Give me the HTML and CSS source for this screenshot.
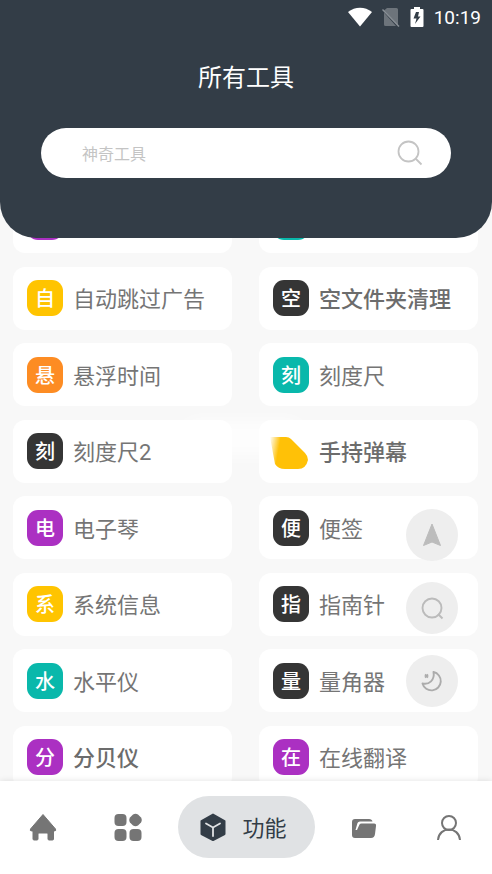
FILE: index.html
```html
<!DOCTYPE html>
<html lang="zh-CN">
<head>
<meta charset="utf-8">
<meta name="viewport" content="width=device-width, initial-scale=1">
<title>所有工具</title>
<link rel="stylesheet" href="styles.css">
</head>
<body>
<header class="header">
  <div class="status">
    <svg width="24" height="20" viewBox="0 0 24 20" aria-hidden="true"><path d="M0 5C7-.8 17-.8 24 5L12 19.500z" fill="#fff"/></svg>
    <svg width="18" height="20" viewBox="0 0 18 20" aria-hidden="true"><path d="M5 1h9.500q1.500 0 1.500 1.500v16L2 3.500zM2 5.500L14 19H3.500Q2 19 2 17.500z" fill="#6d747b"/><path d="M.5 2.500l16.500 17" stroke="#8a9096" stroke-width="1.400"/></svg>
    <svg width="14" height="20" viewBox="0 0 14 20" aria-hidden="true"><path d="M4 0h6v2h2.500q1 0 1 1v16q0 1-1 1h-11q-1 0-1-1V3q0-1 1-1H4z" fill="#fff"/><path d="M9 5H6L3.500 11.500h3L5 17l5.500-7.500H8z" fill="#333d47"/></svg>
    <span class="clock">10:19</span>
  </div>
  <h1 class="title">所有工具</h1>
  <form class="search">
    <input class="search-input" type="text" placeholder="神奇工具" aria-label="搜索工具">
    <button class="search-button" type="button" aria-label="搜索">
      <svg width="26" height="26" viewBox="0 0 26 26" fill="none" stroke="#c4c4c4" stroke-width="1.800"><circle cx="11.500" cy="11.500" r="10"/><path d="M18.500 18.500l6 6"/></svg>
    </button>
  </form>
</header>

<main class="tools">
  <a class="card" href="#"><span class="tile purple"></span></a>
  <a class="card" href="#"><span class="tile teal"></span></a>
  <a class="card" href="#"><span class="tile yellow">自</span><span class="label">自动跳过广告</span></a>
  <a class="card strong" href="#"><span class="tile dark">空</span><span class="label">空文件夹清理</span></a>
  <a class="card" href="#"><span class="tile orange">悬</span><span class="label">悬浮时间</span></a>
  <a class="card" href="#"><span class="tile teal">刻</span><span class="label">刻度尺</span></a>
  <a class="card" href="#"><span class="tile dark">刻</span><span class="label">刻度尺2</span></a>
  <a class="card strong" href="#"><svg class="tile-cut" width="40" height="36" viewBox="-4 0 40 36" aria-hidden="true"><defs><linearGradient id="fade" x1="0" y1="0" x2="1" y2="0.150"><stop offset="0" stop-color="#ffc107" stop-opacity="0"/><stop offset=".28" stop-color="#ffc107"/><stop offset="1" stop-color="#ffc107"/></linearGradient></defs><path d="M-3 4H13Q16 4 18 6L32 20Q35 23 35 27Q33 36 25 36H12Q5 36 2 31z" fill="url(#fade)"/></svg><span class="label">手持弹幕</span></a>
  <a class="card" href="#"><span class="tile purple">电</span><span class="label">电子琴</span></a>
  <a class="card" href="#"><span class="tile dark">便</span><span class="label">便签</span></a>
  <a class="card" href="#"><span class="tile yellow">系</span><span class="label">系统信息</span></a>
  <a class="card" href="#"><span class="tile dark">指</span><span class="label">指南针</span></a>
  <a class="card" href="#"><span class="tile teal">水</span><span class="label">水平仪</span></a>
  <a class="card" href="#"><span class="tile dark">量</span><span class="label">量角器</span></a>
  <a class="card strong" href="#"><span class="tile purple">分</span><span class="label">分贝仪</span></a>
  <a class="card" href="#"><span class="tile purple">在</span><span class="label">在线翻译</span></a>
  <div class="glow"></div>
</main>

<div class="floating">
  <button class="round" type="button" aria-label="定位"><svg width="20" height="24" viewBox="0 0 20 24"><path d="M10 1L18.500 22.500 10 19 1.500 22.500z" fill="#bcbcbc" stroke="#bcbcbc" stroke-linejoin="round"/></svg></button>
  <button class="round" type="button" aria-label="查找"><svg width="24" height="24" viewBox="0 0 24 24" fill="none" stroke="#bbb" stroke-width="1.900"><circle cx="12" cy="12" r="9.500"/><path d="M18 18l4.500 4.500"/></svg></button>
  <button class="round" type="button" aria-label="夜间模式"><svg width="24" height="24" viewBox="0 0 24 24" fill="none" stroke="#acacac" stroke-width="1.900" stroke-linejoin="round"><path d="M13.500 3A9.300 9.300 0 1 1 2.500 14.500C9 16 15 11 13.500 3z"/><path d="M5 5.500l3 3M8 5.500l-3 3" stroke-width="1.800"/></svg></button>
</div>

<nav class="nav">
  <button class="nav-item" type="button" aria-label="首页"><svg width="28" height="28" viewBox="0 0 28 28"><path d="M14 1.500L26.500 16Q27.500 18 25 18H24.500V26Q24.500 27 23.500 27H20Q19 27 19 26V21Q19 20 18 20H10Q9 20 9 21V26Q9 27 8 27H5Q4 27 4 26V18H3Q.5 18 1.500 16z" fill="#757575" stroke="#757575" stroke-linejoin="round"/></svg></button>
  <button class="nav-item" type="button" aria-label="分类"><svg width="28" height="28" viewBox="0 0 28 28" fill="#757575"><rect x=".5" y="1" width="12" height="12" rx="4"/><path d="M19 1.500q2.500-1.500 5 0l3 3q1.500 2.500 0 5l-3 3q-2.500 1.500-5 0l-3-3q-1.500-2.500 0-5z"/><rect x=".5" y="16" width="12" height="12" rx="4"/><rect x="15.500" y="16" width="12" height="12" rx="4"/></svg></button>
  <button class="nav-item active" type="button"><svg width="28" height="28" viewBox="0 0 28 28"><path d="M14 1.500L25.500 8v13L14 27 2.500 21V8z" fill="#333d47" stroke="#333d47" stroke-width="2" stroke-linejoin="round"/><path d="M7 10.500l7 4 7-4M14 14.500v8.500" fill="none" stroke="#e0e2e4" stroke-width="1.800" stroke-linecap="round"/></svg><span class="label">功能</span></button>
  <button class="nav-item" type="button" aria-label="文件"><svg width="26" height="28" viewBox="0 0 26 28"><path d="M1 9Q1 6 4 6H18Q21 6 21.500 8.500H9Q7 8.500 6.500 10L4.500 17H6L8.500 11.500Q9 10.500 10.500 10.500H23Q25.500 10.500 25 13L24 21Q23.500 25 20 25H4Q1 25 1 22z" fill="#757575"/></svg></button>
  <button class="nav-item" type="button" aria-label="我的"><svg width="26" height="28" viewBox="0 0 26 28" fill="none" stroke="#757575" stroke-width="2"><circle cx="13" cy="10" r="7"/><path d="M2 27C3 13 23 13 24 27"/></svg></button>
</nav>
</body>
</html>
```

FILE: styles.css
```css
* {
  box-sizing: border-box;
}

body {
  position: relative;
  display: flex;
  flex-direction: column;
  min-height: 100vh;
  margin: 0;
  background: #f8f8f8;
  color: #757575;
  font-family: Roboto, "Noto Sans CJK SC", sans-serif;
}

button {
  padding: 0;
  border: 0;
  background: none;
  font: inherit;
  color: inherit;
}

svg {
  flex: none;
}

.header {
  position: relative;
  z-index: 1;
  padding-bottom: 60px;
  border-radius: 0 0 36px 36px;
  background: #333d47;
}

.status {
  display: flex;
  align-items: center;
  justify-content: flex-end;
  gap: 10px;
  height: 34px;
  padding-right: 11px;
}

.clock {
  color: #fff;
  font-size: 19px;
  font-weight: 400;
}

.title {
  margin: 25px 0 31px;
  color: #fff;
  font-size: 24px;
  font-weight: 400;
  line-height: 38px;
  text-align: center;
}

.search {
  display: flex;
  align-items: center;
  height: 50px;
  margin: 0 41px;
  padding: 0 28px 0 41px;
  border-radius: 25px;
  background: #fff;
}

.search-input {
  flex: 1;
  min-width: 0;
  padding: 2px 0 0;
  border: 0;
  outline: 0;
  background: none;
  color: #757575;
  font: inherit;
  font-size: 16px;
}

.search-input::placeholder {
  color: #c4c4c4;
}

.search-button {
  display: flex;
}

.tools {
  position: relative;
  display: grid;
  flex: 1;
  grid-template-columns: 1fr 1fr;
  grid-auto-rows: 63px;
  align-content: space-between;
  column-gap: 27px;
  margin: -48px 14px -8px 13px;
}

.card {
  display: flex;
  align-items: center;
  gap: 10px;
  padding: 0 14px;
  border-radius: 12px;
  background: #fff;
  color: inherit;
  font-size: 22px;
  text-decoration: none;
  white-space: nowrap;
}

.label {
  padding-bottom: 2px;
}

.strong {
  color: #6c6c6c;
  font-weight: 500;
}

.tile {
  display: flex;
  flex: none;
  align-items: center;
  justify-content: center;
  width: 36px;
  height: 36px;
  padding-top: 2px;
  border-radius: 11px;
  color: #fff;
  font-size: 20px;
  font-weight: 500;
  line-height: 34px;
}

.tile-cut {
  position: relative;
  z-index: 1;
  margin-left: -4px;
  filter: blur(0.6px);
}

.purple { background: #ab30c2; }
.teal { background: #09b8ab; }
.yellow { background: #ffc400; }
.orange { background: #fd8c23; }
.dark { background: #353535; }

.glow {
  position: absolute;
  top: 230px;
  left: 168px;
  width: 124px;
  height: 36px;
  border-radius: 18px;
  background: rgba(255, 255, 255, 0.7);
  filter: blur(8px);
}

.floating {
  position: absolute;
  right: 34px;
  bottom: 167px;
  display: flex;
  flex-direction: column;
  gap: 21px;
}

.round {
  display: flex;
  align-items: center;
  justify-content: center;
  width: 52px;
  height: 52px;
  border-radius: 50%;
  background: #eee;
}

.nav {
  position: relative;
  z-index: 1;
  display: flex;
  align-items: center;
  height: 93px;
  padding-bottom: 2px;
  background: #fff;
  box-shadow: 0 0 6px rgba(0, 0, 0, 0.12);
}

.nav-item {
  display: flex;
  flex: 1;
  align-items: center;
  justify-content: center;
  height: 62px;
}

.active {
  flex: none;
  gap: 16px;
  margin: 0 7px;
  padding: 0 28px 0 21px;
  border-radius: 31px;
  background: #e0e2e4;
  color: #333d47;
  font-size: 22px;
}
```
